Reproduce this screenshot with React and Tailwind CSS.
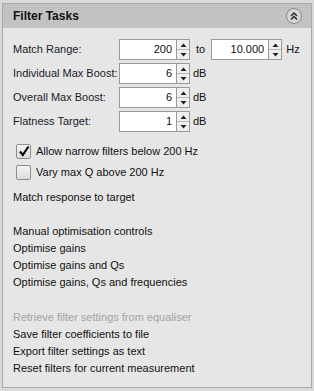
import React from 'react';

// Small up/down spinner attached to a number box
const Spinner = () => (
  <div className="flex flex-col w-[13px] h-full border border-l-0 border-[#9a9a9a] bg-[#efefef]">
    <div className="flex-1 flex items-center justify-center border-b border-[#b5b5b5]">
      <svg width="7" height="4" viewBox="0 0 7 4"><path d="M0.5 4 L3.5 0.5 L6.5 4 Z" fill="#222" /></svg>
    </div>
    <div className="flex-1 flex items-center justify-center">
      <svg width="7" height="4" viewBox="0 0 7 4"><path d="M0.5 0 L3.5 3.5 L6.5 0 Z" fill="#222" /></svg>
    </div>
  </div>
);

const NumberBox = ({ value, width = 'w-[58px]' }) => (
  <div className="flex h-[21px]">
    <div className={`${width} h-full bg-white border border-[#9a9a9a] flex items-center justify-end pr-[4px] text-[11px] text-[#111]`}>
      {value}
    </div>
    <Spinner />
  </div>
);

const FieldRow = ({ label, children }) => (
  <div className="flex items-center h-[21px]">
    <div className="w-[106px] text-[11px] text-[#1a1a2a]">{label}</div>
    {children}
  </div>
);

const Checkbox = ({ checked, label }) => (
  <div className="flex items-center h-[16px] pl-[3px]">
    <div className="w-[15px] h-[15px] rounded-[2px] border border-[#8e8e8e] bg-gradient-to-b from-[#f4f4f4] to-[#dcdcdc] flex items-center justify-center">
      {checked && (
        <svg width="12" height="12" viewBox="0 0 12 12">
          <path d="M2 6.5 L4.8 10 L10.5 1.5" fill="none" stroke="#000" strokeWidth="2.2" />
        </svg>
      )}
    </div>
    <span className="ml-[5px] text-[11px] text-[#111]">{label}</span>
  </div>
);

const Link = ({ children, disabled }) => (
  <div className={`h-[17px] leading-[17px] text-[11px] ${disabled ? 'text-[#a3a3a3]' : 'text-[#111]'}`}>{children}</div>
);

export default function App() {
  return (
    <div className="w-[314px] h-[391px] bg-[#dadada] pt-[3px] px-[2px] pb-[3px]" style={{ fontFamily: '"Liberation Sans", Arial, sans-serif' }}>
      <div className="h-full flex flex-col border border-[#a9a9a9] bg-[#e6e6e6]">
        {/* Header */}
        <div className="h-[24px] bg-[#c2c2c2] flex items-center justify-between pl-[10px] pr-[9px]">
          <span className="text-[12px] font-bold text-[#111]">Filter Tasks</span>
          <div className="w-[16px] h-[16px] rounded-full border border-[#8a8a8a] bg-[#d6d6d6] flex items-center justify-center">
            <svg width="8" height="8" viewBox="0 0 8 8">
              <path d="M1 4 L4 1 L7 4 M1 7.5 L4 4.5 L7 7.5" fill="none" stroke="#222" strokeWidth="1.4" />
            </svg>
          </div>
        </div>

        {/* Body */}
        <div className="flex flex-col pl-[10px] pt-[11px]">
          <div className="flex flex-col gap-[3px]">
            <FieldRow label="Match Range:">
              <NumberBox value="200" />
              <span className="ml-[6px] mr-[6px] text-[11px] text-[#111]">to</span>
              <NumberBox value="10.000" />
              <span className="ml-[4px] text-[11px] text-[#111]">Hz</span>
            </FieldRow>
            <FieldRow label="Individual Max Boost:">
              <NumberBox value="6" />
              <span className="ml-[3px] text-[11px] text-[#111]">dB</span>
            </FieldRow>
            <FieldRow label="Overall Max Boost:">
              <NumberBox value="6" />
              <span className="ml-[3px] text-[11px] text-[#111]">dB</span>
            </FieldRow>
            <FieldRow label="Flatness Target:">
              <NumberBox value="1" />
              <span className="ml-[3px] text-[11px] text-[#111]">dB</span>
            </FieldRow>
          </div>

          <div className="flex flex-col gap-[5px] mt-[11px]">
            <Checkbox checked label="Allow narrow filters below 200 Hz" />
            <Checkbox label="Vary max Q above 200 Hz" />
          </div>

          <div className="mt-[9px]">
            <Link>Match response to target</Link>
          </div>

          <div className="mt-[17px]">
            <Link>Manual optimisation controls</Link>
            <Link>Optimise gains</Link>
            <Link>Optimise gains and Qs</Link>
            <Link>Optimise gains, Qs and frequencies</Link>
          </div>

          <div className="mt-[18px]">
            <Link disabled>Retrieve filter settings from equaliser</Link>
            <Link>Save filter coefficients to file</Link>
            <Link>Export filter settings as text</Link>
            <Link>Reset filters for current measurement</Link>
          </div>
        </div>
      </div>
    </div>
  );
}
